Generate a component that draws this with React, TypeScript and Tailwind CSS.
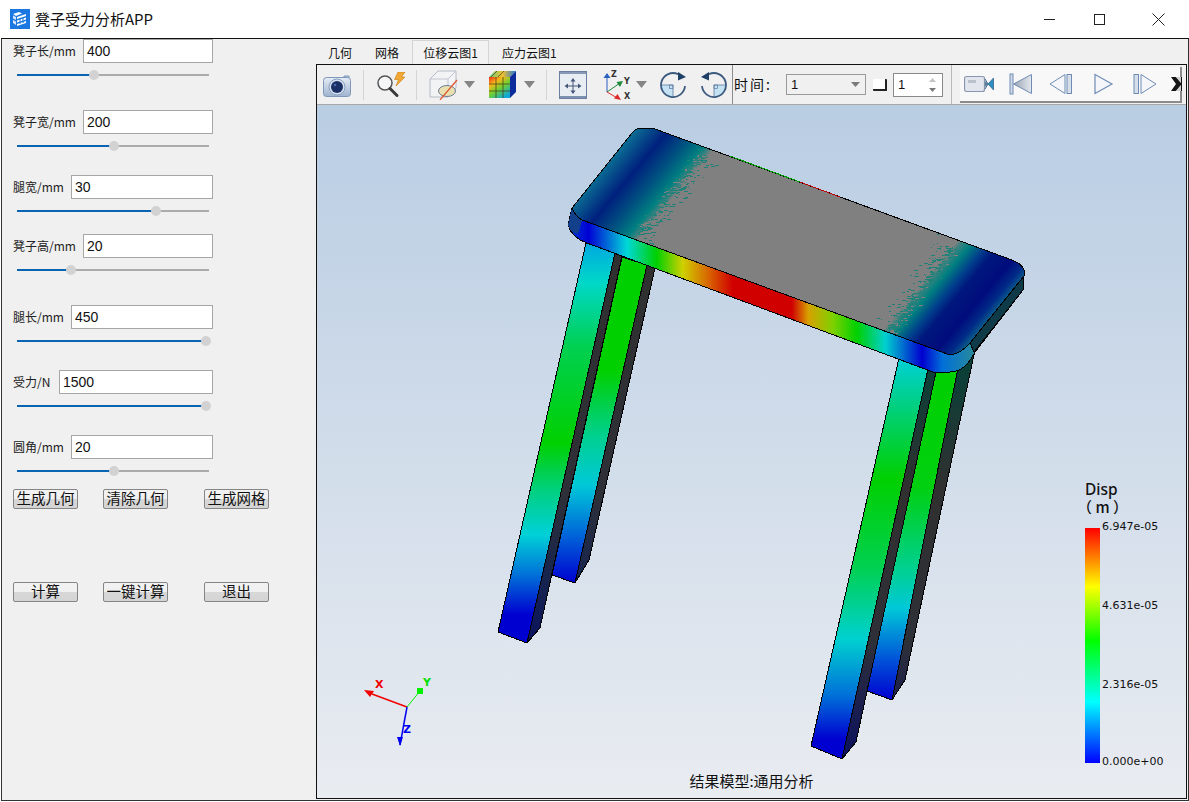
import React from "react";

const cjk = "font-['Noto_Sans_CJK_SC','Noto_Sans',sans-serif]";

function Slider({ pos }: { pos: number }) {
  return (
    <div className="relative mt-[6px] ml-[4px] h-[12px] w-[192px]">
      <div className="absolute left-0 right-0 top-[5px] h-[2px] bg-[#ababab]" />
      <div className="absolute left-0 top-[5px] h-[2px] bg-[#0a64b4]" style={{ width: pos }} />
      <div className="absolute top-[1px] h-[10px] w-[10px] rounded-full bg-[#d2d2d2]" style={{ left: pos - 5 }} />
    </div>
  );
}

function Field({ label, value, pos, labelW, className }: { label: string; value: string; pos: number; labelW: string; className: string }) {
  return (
    <div className={className}>
      <div className="flex h-[24px] w-[200px] items-center">
        <span className={`whitespace-nowrap text-[12px] leading-none text-[#222] ${labelW}`}>{label}</span>
        <div className="flex h-[24px] min-w-0 flex-1 items-center border border-[#a6a6a6] bg-white pl-[3px] font-['Liberation_Sans',sans-serif] text-[14px] text-[#111]">
          {value}
        </div>
      </div>
      <Slider pos={pos} />
    </div>
  );
}

function Btn({ label, className }: { label: string; className: string }) {
  return (
    <button className={`h-[20px] w-[65px] whitespace-nowrap rounded-[2px] border border-[#858585] bg-[linear-gradient(to_bottom,#f2f2f2_0%,#f0f0f0_50%,#d8d8d8_50%,#d4d4d4_100%)] pb-[2px] text-center text-[14.5px] leading-[16px] text-[#111] ${className}`}>
      {label}
    </button>
  );
}

function AppLogo() {
  return (
    <svg width="20" height="20" viewBox="0 0 20 20" className="ml-[10px] shrink-0">
      <rect width="20" height="20" fill="#1a78e0" />
      <path d="M3 5 L9 3 L12 4.5 L6 7 Z" fill="#fff" />
      <path d="M3 6.5 L6 8 V11 L3 9.5 Z M3 11 L6 12.5 V16 L3 14 Z" fill="#d5e6fa" />
      <path d="M7 8 L16 5 V7 L7 10 Z M7 11.5 L16 8.5 V10.5 L7 13.5 Z M7 15 L16 12 V14 L7 17 Z" fill="#fff" />
      <path d="M10 9.5 V15 M13 8.5 V14" stroke="#1a78e0" strokeWidth="1" />
    </svg>
  );
}

function Dd() {
  return (
    <svg width="11" height="7" viewBox="0 0 11 7" className="shrink-0">
      <path d="M0 0 H11 L5.5 7 Z" fill="#858585" />
    </svg>
  );
}

function Sep({ className }: { className: string }) {
  return <div className={`h-[30px] w-px shrink-0 bg-[#d4d4d4] ${className}`} />;
}

function CameraIco() {
  return (
    <svg width="28" height="26" viewBox="0 0 28 26" className="ml-[6px] shrink-0">
      <defs>
        <linearGradient id="cb" x1="0" y1="0" x2="0" y2="1">
          <stop offset="0" stopColor="#e4ecf6" />
          <stop offset="1" stopColor="#9fb4d0" />
        </linearGradient>
      </defs>
      <path d="M21 4 h5 v3 h-5 Z" fill="#b7c8de" stroke="#7f98ba" />
      <rect x="0.5" y="5.5" width="27" height="19" rx="3" fill="url(#cb)" stroke="#7f98ba" />
      <circle cx="14" cy="15" r="8" fill="#d6e0ee" stroke="#8aa0c0" />
      <circle cx="14" cy="15" r="6" fill="#1a2f66" />
      <circle cx="12" cy="13" r="1.3" fill="#4a6aa8" />
    </svg>
  );
}

function MagnifierIco() {
  return (
    <svg width="30" height="26" viewBox="0 0 30 26" className="ml-[12px] shrink-0">
      <circle cx="9" cy="11" r="7" fill="#f4f6f8" stroke="#555" strokeWidth="1.5" />
      <path d="M14 16.5 L21 23.5" stroke="#3a3a3a" strokeWidth="3" strokeLinecap="round" />
      <path d="M22 0 L29 0 L25.5 5 L29 5 L20 14 L22.5 7.5 L18.5 7.5 Z" fill="#f2a832" stroke="#c77c10" strokeWidth="0.6" />
    </svg>
  );
}

function CubeIco() {
  return (
    <svg width="30" height="30" viewBox="0 0 30 30" className="ml-[12px] shrink-0">
      <path d="M1 9 L9 1 H27 V18 L19 27 H1 Z" fill="#f2f3f5" stroke="#b4bcc8" />
      <path d="M1 9 H19 V27 M19 9 L27 1" fill="none" stroke="#c0c6d0" />
      <ellipse cx="18" cy="21" rx="8.5" ry="5.5" fill="#e8e0b0" stroke="#6f7f96" />
      <path d="M11 30 L28 10" stroke="#e0542c" strokeWidth="1.2" />
    </svg>
  );
}

function RainbowCubeIco() {
  return (
    <svg width="29" height="29" viewBox="0 0 29 29" className="ml-[13px] shrink-0">
      <defs>
        <linearGradient id="rb" x1="0" y1="0" x2="0.7" y2="1">
          <stop offset="0" stopColor="#f02818" />
          <stop offset="0.3" stopColor="#f8b818" />
          <stop offset="0.6" stopColor="#70d030" />
          <stop offset="1" stopColor="#10a8d8" />
        </linearGradient>
        <linearGradient id="rt" x1="0" y1="0" x2="1" y2="0">
          <stop offset="0" stopColor="#60d080" />
          <stop offset="0.5" stopColor="#f0c030" />
          <stop offset="1" stopColor="#1878d8" />
        </linearGradient>
      </defs>
      <path d="M1 7 L7 1 H28 L22 7 Z" fill="url(#rt)" />
      <path d="M22 7 L28 1 V22 L22 28 Z" fill="#0c2c9c" />
      <rect x="1" y="7" width="21" height="21" fill="url(#rb)" />
      <path d="M8 7 V28 M15 7 V28 M1 14 H22 M1 21 H22 M9 1 L3 7 M16 1 L10 7" stroke="#403818" strokeWidth="0.7" fill="none" />
    </svg>
  );
}

function FitIco() {
  const head = "#44577a";
  return (
    <svg width="28" height="28" viewBox="0 0 28 28" className="ml-[12px] shrink-0">
      <rect x="0.5" y="0.5" width="27" height="27" fill="#e8ecf3" stroke="#6c7fa0" />
      <rect x="1" y="1" width="26" height="2" fill="#8899b8" />
      <rect x="1" y="25" width="26" height="2" fill="#7d90b0" />
      <path d="M14 9 V21 M8 15 H20" stroke={head} strokeWidth="1" />
      <path d="M14 7 L11.5 10.5 H16.5 Z M14 23 L11.5 19.5 H16.5 Z M5.5 15 L9 12.5 V17.5 Z M22.5 15 L19 12.5 V17.5 Z" fill={head} />
    </svg>
  );
}

function AxesIco() {
  return (
    <svg width="30" height="30" viewBox="0 0 30 30" className="ml-[15px] shrink-0">
      <path d="M5 22 V7" stroke="#2a60c0" strokeWidth="1" />
      <path d="M5 3 L1.5 8 H8.5 Z" fill="#2a60c0" />
      <path d="M5 22 L18 13" stroke="#1e8a3c" strokeWidth="1" />
      <path d="M21 11 L14.5 12 L18 17 Z" fill="#1e8a3c" />
      <path d="M5 22 L17 29" stroke="#e02a2a" strokeWidth="1" />
      <path d="M19 30 L12 28.5 L15.5 24 Z" fill="#e02a2a" />
      <text x="9" y="7" fontSize="8" fontWeight="700" fontFamily="'DejaVu Sans',sans-serif" fill="#333">Z</text>
      <text x="22" y="14" fontSize="8" fontWeight="700" fontFamily="'DejaVu Sans',sans-serif" fill="#333">Y</text>
      <text x="22" y="29" fontSize="8" fontWeight="700" fontFamily="'DejaVu Sans',sans-serif" fill="#333">X</text>
    </svg>
  );
}

function RotateIco({ flip, className }: { flip?: boolean; className: string }) {
  return (
    <svg width="27" height="26" viewBox="0 0 27 26" className={`shrink-0 ${className}`}>
      <g transform={flip ? "translate(27 0) scale(-1 1)" : undefined}>
        <path d="M13 13 H1 A12 12 0 0 0 13 25 Z" fill="#c4e2f4" />
        <path d="M13 13 H1 M13 13 V25" stroke="#5c7aa0" strokeWidth="0.8" />
        <path d="M25 14 A12 12 0 1 1 18 2.1" fill="none" stroke="#3c5a7e" strokeWidth="1.8" />
        <path d="M18 0 L26 5 L18 8.5 Z" fill="#1e3f66" />
        <rect x="9.5" y="13" width="3.5" height="3.5" fill="none" stroke="#5c7aa0" strokeWidth="0.7" />
      </g>
    </svg>
  );
}

function VideoIco() {
  return (
    <svg width="30" height="18" viewBox="0 0 30 18" className="ml-[4px] shrink-0">
      <rect x="0.5" y="1.5" width="20" height="15" rx="2" fill="#e2e6ec" stroke="#8796ae" strokeWidth="1.2" />
      <rect x="4" y="5" width="8" height="3" fill="#b8c0cc" />
      <path d="M21 6 L24 9 L21 12 Z" fill="#5a7a9c" />
      <path d="M24 9 L29.5 3 V15 Z" fill="#2c8ec0" stroke="#3a6890" strokeWidth="0.8" />
      <path d="M24 9 L21 4 M24 9 L21 14" stroke="#3a6890" strokeWidth="1" />
    </svg>
  );
}

function Transport({ kind, className }: { kind: "first" | "prev" | "play" | "next"; className: string }) {
  const s = "#6f8db4";
  return (
    <svg width="24" height="22" viewBox="0 0 24 22" className={`shrink-0 ${className}`}>
      <defs>
        <linearGradient id="tg" x1="0" y1="0" x2="1" y2="0">
          <stop offset="0" stopColor="#9aa4b2" />
          <stop offset="1" stopColor="#e4e8ee" />
        </linearGradient>
      </defs>
      {kind === "first" && (
        <g>
          <rect x="1" y="1" width="3" height="20" fill="#d0dae8" stroke={s} />
          <path d="M4.5 11 L22.5 1.5 V20.5 Z" fill="url(#tg)" stroke={s} />
        </g>
      )}
      {kind === "prev" && (
        <g>
          <path d="M1 11 L16 1.5 V20.5 Z" fill="#f4f6fa" stroke={s} />
          <rect x="18" y="1.5" width="4.5" height="19" fill="#d6dee9" stroke={s} />
        </g>
      )}
      {kind === "play" && <path d="M3 1.5 L20 11 L3 20.5 Z" fill="#f4f6fa" stroke={s} strokeWidth="1.2" />}
      {kind === "next" && (
        <g>
          <rect x="1" y="1.5" width="4.5" height="19" fill="#d6dee9" stroke={s} />
          <path d="M8 1.5 L23 11 L8 20.5 Z" fill="#f4f6fa" stroke={s} />
        </g>
      )}
    </svg>
  );
}

function Toolbar() {
  return (
    <div className="flex h-[40px] shrink-0 items-center border-b border-[#a8a8a8] bg-[#f0f0f0]">
      <CameraIco />
      <Sep className="ml-[12px]" />
      <MagnifierIco />
      <Sep className="ml-[10px]" />
      <CubeIco />
      <div className="ml-[5px]"><Dd /></div>
      <RainbowCubeIco />
      <div className="ml-[7px]"><Dd /></div>
      <Sep className="ml-[11px]" />
      <FitIco />
      <AxesIco />
      <div className="ml-[4px]"><Dd /></div>
      <RotateIco className="ml-[13px]" />
      <RotateIco flip className="ml-[13px]" />
      <div className="ml-[5px] h-full w-px shrink-0 bg-[#8c8c8c]" />
      <span className="ml-[1px] w-[36px] shrink-0 whitespace-nowrap text-[14px] tracking-[2px] text-[#111]">时间:</span>
      <div className="ml-[16px] flex h-[21px] w-[80px] shrink-0 items-center justify-between border border-[#9a9a9a] pl-[4px] pr-[5px] font-['Liberation_Sans',sans-serif] text-[13px] text-[#111]">
        <span>1</span>
        <svg width="9" height="5" viewBox="0 0 9 5"><path d="M0 0 H9 L4.5 5 Z" fill="#7a7a7a" /></svg>
      </div>
      <div className="ml-[7px] h-[12px] w-[14px] shrink-0 rounded-[1px] border-b-2 border-r-2 border-[#222] bg-white" />
      <div className="ml-[6px] flex h-[24px] w-[50px] shrink-0 items-center justify-between border border-[#8a8a8a] bg-white pl-[4px] pr-[6px] font-['Liberation_Sans',sans-serif] text-[13px] text-[#111]">
        <span>1</span>
        <svg width="7" height="14" viewBox="0 0 7 14"><path d="M3.5 0 L7 4 H0 Z" fill="#c4c4c4" /><path d="M3.5 14 L7 10 H0 Z" fill="#7a7a7a" /></svg>
      </div>
      <div className="ml-[8px] h-full w-px shrink-0 bg-[#b8b8b8]" />
      <div className="ml-[8px] flex h-[36px] w-[222px] shrink-0 items-center border-b-2 border-r-2 border-[#8c8c8c] bg-[#f8f8f8]">
        <VideoIco />
        <Transport kind="first" className="ml-[15px]" />
        <Transport kind="prev" className="ml-[16px]" />
        <Transport kind="play" className="ml-[19px]" />
        <Transport kind="next" className="ml-[17px]" />
        <svg width="11" height="20" viewBox="0 0 11 20" className="ml-[14px] shrink-0">
          <path d="M0 3 H5 L10 9 V3 H11 V17 H10 V11 L5 17 H0 L5 10 Z" fill="#151515" />
          <path d="M5 3 L10 9 V3 Z M5 17 L10 11 V17 Z" fill="#cfcfcf" />
        </svg>
      </div>
    </div>
  );
}

function rng(seed: number) {
  let s = seed;
  return () => {
    s = (s * 16807) % 2147483647;
    return s / 2147483647;
  };
}

function speckle(x0: number, y0: number, x1: number, y1: number, seed: number, dirX: number) {
  const r = rng(seed);
  const out: { x: number; y: number; w: number }[] = [];
  for (let i = 0; i < 340; i++) {
    const t = r();
    const d = (r() - 0.3) * (r() * 30) * dirX;
    out.push({
      x: Math.round(x0 + (x1 - x0) * t + d * 0.77),
      y: Math.round(y0 + (y1 - y0) * t + d * 0.64),
      w: 1 + Math.floor(r() * 4),
    });
  }
  return out;
}

function Stool() {
  const left = speckle(703, 152, 638, 234, 12345, 1);
  const right = speckle(952, 246, 891, 332, 6789, -1);
  return (
    <svg width="869" height="694" viewBox="317 105 869 694" className="absolute left-0 top-0" shapeRendering="crispEdges">
      <defs>
        <linearGradient id="topG" gradientUnits="userSpaceOnUse" x1="572" y1="207" x2="873" y2="458">
          <stop offset="0" stopColor="#0a6a92" />
          <stop offset="0.064" stopColor="#00207e" />
          <stop offset="0.115" stopColor="#005080" />
          <stop offset="0.158" stopColor="#008080" />
          <stop offset="0.173" stopColor="#408080" />
          <stop offset="0.184" stopColor="#808080" />
          <stop offset="0.811" stopColor="#808080" />
          <stop offset="0.821" stopColor="#3e8280" />
          <stop offset="0.842" stopColor="#008080" />
          <stop offset="0.875" stopColor="#003f8c" />
          <stop offset="0.9" stopColor="#00187e" />
          <stop offset="0.95" stopColor="#000c7c" />
          <stop offset="0.98" stopColor="#002a88" />
          <stop offset="1" stopColor="#0a5a8a" />
        </linearGradient>
        <linearGradient id="frontG" gradientUnits="userSpaceOnUse" x1="568" y1="0" x2="975" y2="0">
          <stop offset="0" stopColor="#0040d0" />
          <stop offset="0.05" stopColor="#0000d4" />
          <stop offset="0.145" stopColor="#00d8d8" />
          <stop offset="0.218" stopColor="#00d000" />
          <stop offset="0.282" stopColor="#d0d000" />
          <stop offset="0.348" stopColor="#d86000" />
          <stop offset="0.405" stopColor="#d00000" />
          <stop offset="0.55" stopColor="#d00000" />
          <stop offset="0.59" stopColor="#d8a000" />
          <stop offset="0.65" stopColor="#80d000" />
          <stop offset="0.71" stopColor="#00d000" />
          <stop offset="0.78" stopColor="#00d0d0" />
          <stop offset="0.87" stopColor="#0000d0" />
          <stop offset="0.92" stopColor="#0070d8" />
          <stop offset="1" stopColor="#2a8a9a" />
        </linearGradient>
        <linearGradient id="l1" gradientUnits="userSpaceOnUse" x1="0" y1="243" x2="0" y2="643">
          <stop offset="0" stopColor="#00a8e0" />
          <stop offset="0.1" stopColor="#00d8c8" />
          <stop offset="0.26" stopColor="#00d050" />
          <stop offset="0.5" stopColor="#00d000" />
          <stop offset="0.62" stopColor="#00d080" />
          <stop offset="0.73" stopColor="#00d0d8" />
          <stop offset="0.83" stopColor="#0070d8" />
          <stop offset="0.93" stopColor="#0000d0" />
          <stop offset="1" stopColor="#0000d0" />
        </linearGradient>
        <linearGradient id="l2" gradientUnits="userSpaceOnUse" x1="0" y1="257" x2="0" y2="583">
          <stop offset="0" stopColor="#00d000" />
          <stop offset="0.35" stopColor="#00d000" />
          <stop offset="0.55" stopColor="#00d090" />
          <stop offset="0.7" stopColor="#00c8d8" />
          <stop offset="0.86" stopColor="#0060d8" />
          <stop offset="1" stopColor="#0000d0" />
        </linearGradient>
        <linearGradient id="l3" gradientUnits="userSpaceOnUse" x1="0" y1="358" x2="0" y2="760">
          <stop offset="0" stopColor="#00d0d8" />
          <stop offset="0.14" stopColor="#00d070" />
          <stop offset="0.3" stopColor="#00d000" />
          <stop offset="0.52" stopColor="#00d050" />
          <stop offset="0.7" stopColor="#00d0d0" />
          <stop offset="0.84" stopColor="#0070d8" />
          <stop offset="0.95" stopColor="#0000d0" />
        </linearGradient>
        <linearGradient id="l4" gradientUnits="userSpaceOnUse" x1="0" y1="373" x2="0" y2="700">
          <stop offset="0" stopColor="#00d000" />
          <stop offset="0.35" stopColor="#00d010" />
          <stop offset="0.6" stopColor="#00d090" />
          <stop offset="0.72" stopColor="#00c8d8" />
          <stop offset="0.88" stopColor="#0050d8" />
          <stop offset="1" stopColor="#0000d0" />
        </linearGradient>
        <linearGradient id="sd" gradientUnits="userSpaceOnUse" x1="0" y1="260" x2="0" y2="650">
          <stop offset="0" stopColor="#303030" />
          <stop offset="0.6" stopColor="#2e3038" />
          <stop offset="0.82" stopColor="#16244e" />
          <stop offset="1" stopColor="#0a1060" />
        </linearGradient>
        <linearGradient id="sd2" gradientUnits="userSpaceOnUse" x1="0" y1="370" x2="0" y2="760">
          <stop offset="0" stopColor="#0a4038" />
          <stop offset="0.3" stopColor="#303030" />
          <stop offset="0.7" stopColor="#2e3038" />
          <stop offset="1" stopColor="#0a1060" />
        </linearGradient>
      </defs>

      {/* back legs */}
      <polygon points="622,257 647,265 575,583 552,575" fill="url(#l2)" stroke="#000" />
      <polygon points="647,265 655,268 589,560 575,583" fill="url(#sd)" stroke="#000" />
      <polygon points="935,373 965,365 892,700 864,690" fill="url(#l4)" stroke="#000" />
      <polygon points="958,368 975,350 905,680 892,700" fill="url(#sd2)" stroke="#000" />
      {/* front legs */}
      <polygon points="586,243 615,253 527,643 498,632" fill="url(#l1)" stroke="#000" />
      <polygon points="615,253 622,256 540,628 527,643" fill="url(#sd)" stroke="#000" />
      <polygon points="899,358 928,369 842,759 811,746" fill="url(#l3)" stroke="#000" />
      <polygon points="928,369 936,372 856,742 842,759" fill="url(#sd2)" stroke="#000" />

      {/* seat edge */}
      <path d="M572 208 Q575 216 582 220 L950 355 Q962 353 970 343 L1024 276 L1023 290 L975 352 Q965 372 950 372 L933 372 L587 243 Q572 238 568 225 Z" fill="url(#frontG)" stroke="#000" />
      <path d="M970 343 L1024 276 L1023 290 L974 352 Z" fill="#0f3a48" stroke="#000" />
      <path d="M572 208 Q574 216 582 220 L578 234 Q570 232 568 225 Z" fill="#12408a" />
      {/* seat top */}
      <path d="M637 129 Q642 128 655 129 L1012 260 Q1027 266 1024 276 L970 343 Q962 353 950 355 L582 220 Q575 216 572 208 L632 133 Q634 130 637 129 Z" fill="url(#topG)" stroke="#000" />
      {left.map((p, i) => (
        <rect key={`a${i}`} x={p.x} y={p.y} width={p.w} height={1} fill={i % 3 === 0 ? "#808080" : "#1e8278"} />
      ))}
      {right.map((p, i) => (
        <rect key={`b${i}`} x={p.x} y={p.y} width={p.w} height={1} fill={i % 3 === 0 ? "#808080" : "#1e8278"} />
      ))}
      {/* bits of colour along the far edge */}
      <path d="M730 156 L800 182" stroke="#00a000" strokeWidth="1" />
      <path d="M800 182 L840 197" stroke="#c00000" strokeWidth="1" />
      <path d="M840 197 L930 230" stroke="#000" strokeWidth="1" />

      {/* triad */}
      <g shapeRendering="auto">
        <path d="M407 707 L372 694" stroke="#f00000" strokeWidth="1.5" />
        <path d="M364 690 L374 691 L370 697 Z" fill="#f00000" />
        <path d="M407 707 L420 691" stroke="#00f000" strokeWidth="1" />
        <rect x="417" y="688" width="6" height="6" fill="#00f000" />
        <path d="M407 707 L400 745" stroke="#0000f0" strokeWidth="1.5" />
        <path d="M397 737 L403 737 L400 746 Z" fill="#0000f0" />
        <text x="375" y="688" fontSize="11" fontWeight="700" fontFamily="'DejaVu Sans',sans-serif" fill="#f00000">X</text>
        <text x="423" y="686" fontSize="11" fontWeight="700" fontFamily="'DejaVu Sans',sans-serif" fill="#00e000">Y</text>
        <text x="403" y="733" fontSize="11" fontWeight="700" fontFamily="'DejaVu Sans',sans-serif" fill="#0000f0">Z</text>
      </g>
    </svg>
  );
}

function Legend() {
  const labels = [
    { t: "6.947e-05", c: "top-[415px]" },
    { t: "4.631e-05", c: "top-[494px]" },
    { t: "2.316e-05", c: "top-[573px]" },
    { t: "0.000e+00", c: "top-[650px]" },
  ];
  return (
    <>
      <div className="absolute left-[768px] top-[376px] font-['Noto_Sans',sans-serif] text-[15.5px] font-medium leading-[16px] text-[#111]">Disp</div>
      <div className="absolute left-[760px] top-[394px] whitespace-nowrap font-['Noto_Sans_CJK_SC',sans-serif] text-[15px] font-medium leading-[16px] text-[#111]">（ m ）</div>
      <div className="absolute left-[768px] top-[423px] h-[235px] w-[15px] bg-[linear-gradient(to_bottom,#ff0000,#ffff00_25%,#00ff00_48%,#00ffff_74%,#0000ff)]" />
      {labels.map((l) => (
        <div key={l.t} className={`absolute left-[785px] whitespace-nowrap font-['DejaVu_Sans',sans-serif] text-[11px] leading-[14px] text-[#111] ${l.c}`}>{l.t}</div>
      ))}
    </>
  );
}

export default function App() {
  return (
    <div className={`flex h-[802px] w-[1189px] flex-col overflow-hidden bg-white ${cjk}`}>
      <div className="flex h-[38px] shrink-0 items-center bg-white">
        <AppLogo />
        <span className="ml-[5px] whitespace-nowrap text-[15px] text-[#111]">凳子受力分析APP</span>
        <div className="ml-auto flex items-center">
          <svg width="11" height="1" className="mr-[39px]"><rect width="11" height="1" fill="#222" /></svg>
          <svg width="11" height="11" className="mr-[47px]"><rect x="0.5" y="0.5" width="10" height="10" fill="none" stroke="#222" /></svg>
          <svg width="13" height="13" className="mr-[24px]"><path d="M0.5 0.5 L12.5 12.5 M12.5 0.5 L0.5 12.5" stroke="#222" /></svg>
        </div>
      </div>
      <div className="mb-px ml-px flex min-h-0 flex-1 border border-x-[#333] border-b-[#333] border-t-[#111] bg-[#f0f0f0]">
        <div className="w-[314px] shrink-0 pl-[11px]">
          <Field label="凳子长/mm" value="400" pos={77} labelW="w-[70px]" className="" />
          <Field label="凳子宽/mm" value="200" pos={97} labelW="w-[70px]" className="mt-[29px]" />
          <Field label="腿宽/mm" value="30" pos={139} labelW="w-[58px]" className="mt-[23px]" />
          <Field label="凳子高/mm" value="20" pos={54} labelW="w-[70px]" className="mt-[17px]" />
          <Field label="腿长/mm" value="450" pos={189} labelW="w-[58px]" className="mt-[29px]" />
          <Field label="受力/N" value="1500" pos={189} labelW="w-[46px]" className="mt-[23px]" />
          <Field label="圆角/mm" value="20" pos={97} labelW="w-[58px]" className="mt-[23px]" />
          <div className="mt-[12px] flex">
            <Btn label="生成几何" className="" />
            <Btn label="清除几何" className="ml-[25px]" />
            <Btn label="生成网格" className="ml-[36px]" />
          </div>
          <div className="mt-[73px] flex">
            <Btn label="计算" className="" />
            <Btn label="一键计算" className="ml-[25px]" />
            <Btn label="退出" className="ml-[36px]" />
          </div>
        </div>
        <div className="flex w-[871px] shrink-0 flex-col pb-px">
          <div className="flex h-[25px] shrink-0 items-end text-[12px] leading-[16px] text-[#111]">
            <span className="ml-[12px] pb-[3px]">几何</span>
            <span className="ml-[23px] pb-[3px]">网格</span>
            <span className="ml-[13px] flex h-[24px] w-[77px] items-center justify-center border border-b-0 border-[#d4d4d4] bg-[#f2f2f2]">位移云图1</span>
            <span className="ml-[13px] pb-[3px]">应力云图1</span>
          </div>
          <div className="flex min-h-0 flex-1 flex-col border border-[#111]">
            <Toolbar />
            <div className="relative min-h-0 flex-1 overflow-hidden bg-[linear-gradient(to_bottom,#b9cde3,#e9ecf1)]">
              <Stool />
              <Legend />
              <div className="absolute bottom-[8px] left-0 right-0 text-center text-[15px] leading-[18px] text-[#111]">结果模型:通用分析</div>
            </div>
          </div>
        </div>
      </div>
    </div>
  );
}
